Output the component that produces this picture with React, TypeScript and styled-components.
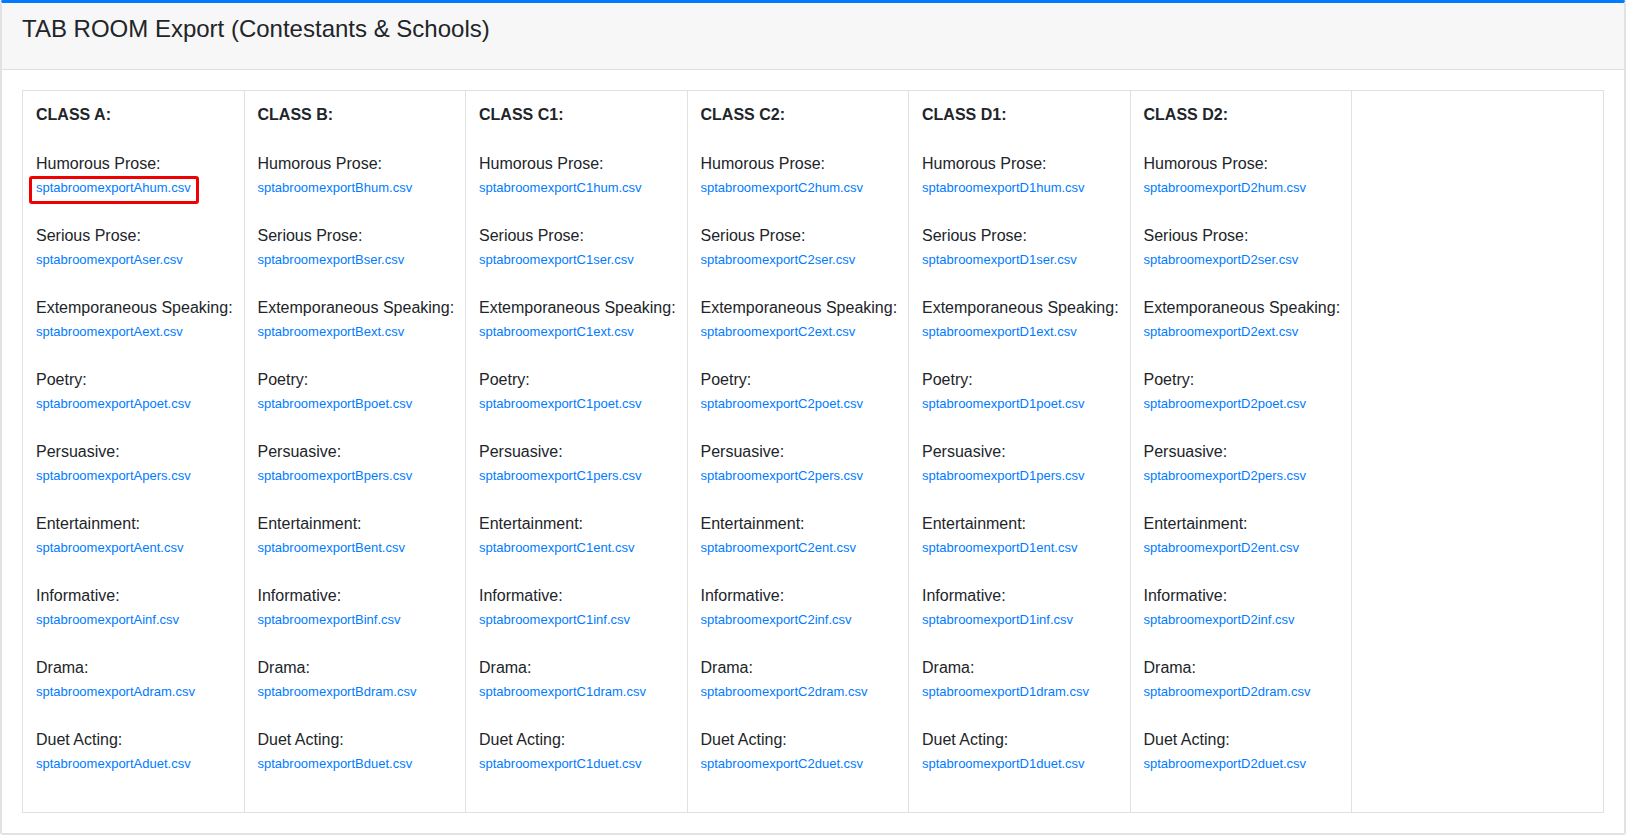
import React from "react";
import styled, { createGlobalStyle } from "styled-components";

const GlobalStyle = createGlobalStyle`
  html, body {
    margin: 0;
    padding: 0;
    background: #ffffff;
  }
  body {
    font-family: "Liberation Sans", Arial, Helvetica, sans-serif;
    color: #212529;
  }
  * { box-sizing: border-box; }
`;

const Card = styled.div`
  width: 1626px;
  height: 835px;
  border: 2px solid #e1e2e6;
  border-top: 3px solid #007bff;
  border-radius: 3px;
  background: #fff;
  display: flex;
  flex-direction: column;
`;

const CardHeader = styled.div`
  height: 67px;
  padding: 12px 20px 0;
  background: #f7f7f7;
  border-bottom: 1px solid #dfdfdf;
`;

const Title = styled.h1`
  margin: 0;
  font-size: 24px;
  line-height: 28.8px;
  font-weight: 400;
  color: #212529;
`;

const CardBody = styled.div`
  padding: 20px;
  flex: 1;
  display: flex;
`;

const ClassGrid = styled.div`
  flex: 1;
  display: grid;
  grid-template-columns: repeat(6, 221.5px) 1fr;
  border: 1px solid #dee2e6;
  align-self: stretch;
`;

const ClassCell = styled.div<{ $empty?: boolean }>`
  padding: 12px 12px 12px 13px;
  border-right: ${(p) => (p.$empty ? "none" : "1px solid #dee2e6")};
  display: flex;
  flex-direction: column;
  gap: 24px;
  font-size: 16px;
  line-height: 24px;
`;

const ClassHeading = styled.div`
  font-weight: 700;
  white-space: nowrap;
  margin-bottom: 1px;
`;

const Event = styled.div`
  display: flex;
  flex-direction: column;
  align-items: flex-start;
`;

const EventLabel = styled.div`
  white-space: nowrap;
`;

const FileLink = styled.a<{ $highlight?: boolean }>`
  position: relative;
  display: inline-block;
  font-size: 13px;
  line-height: 24px;
  color: #007bff;
  text-decoration: none;
  white-space: nowrap;
  ${(p) =>
    p.$highlight
      ? `
    &::after {
      content: "";
      position: absolute;
      left: -7px;
      right: -8px;
      top: -0.5px;
      bottom: -4px;
      border: 3px solid #f00000;
      border-radius: 3px;
    }
  `
      : ""}
`;

const classes = ["A", "B", "C1", "C2", "D1", "D2"];
const events: [string, string][] = [
  ["Humorous Prose:", "hum"],
  ["Serious Prose:", "ser"],
  ["Extemporaneous Speaking:", "ext"],
  ["Poetry:", "poet"],
  ["Persuasive:", "pers"],
  ["Entertainment:", "ent"],
  ["Informative:", "inf"],
  ["Drama:", "dram"],
  ["Duet Acting:", "duet"],
];

export default function App() {
  return (
    <>
      <GlobalStyle />
      <Card>
        <CardHeader>
          <Title>TAB ROOM Export (Contestants &amp; Schools)</Title>
        </CardHeader>
        <CardBody>
          <ClassGrid>
            {classes.map((c) => (
              <ClassCell key={c}>
                <ClassHeading>CLASS {c}:</ClassHeading>
                {events.map(([label, code]) => (
                  <Event key={code}>
                    <EventLabel>{label}</EventLabel>
                    <FileLink
                      href="#"
                      $highlight={c === "A" && code === "hum"}
                    >
                      sptabroomexport{c}
                      {code}.csv
                    </FileLink>
                  </Event>
                ))}
              </ClassCell>
            ))}
            <ClassCell $empty />
          </ClassGrid>
        </CardBody>
      </Card>
    </>
  );
}
